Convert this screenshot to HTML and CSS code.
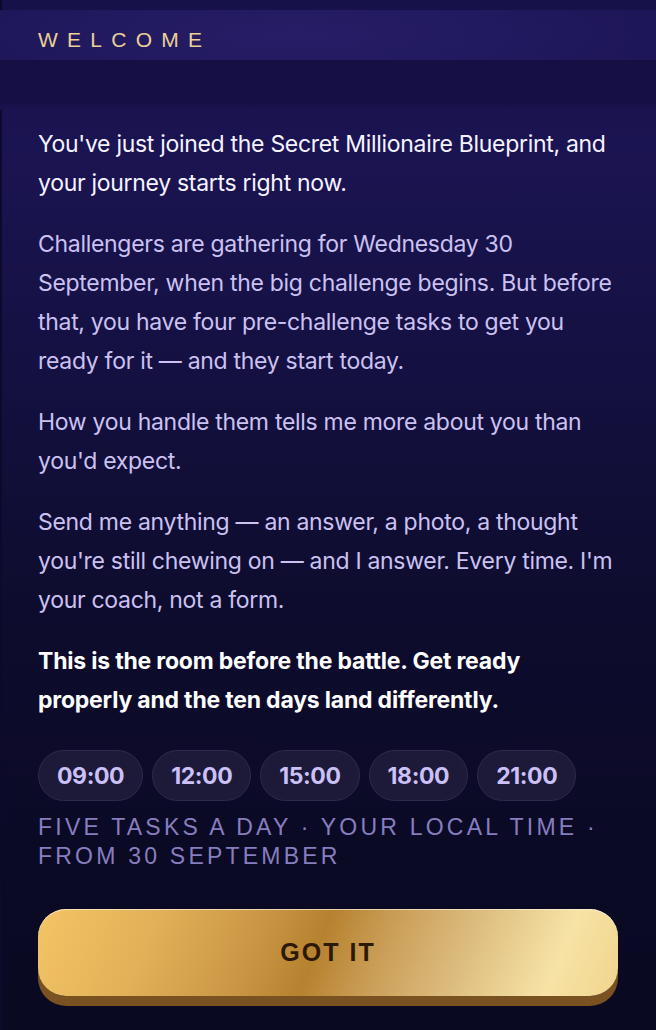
FILE: index.html
```html
<!DOCTYPE html>
<html lang="en">
<head>
<meta charset="utf-8">
<title>Welcome</title>
<link rel="stylesheet" href="styles.css">
</head>
<body>
<div class="panel">
  <header class="header">
    <div class="band"><span class="eyebrow">WELCOME</span></div>
    <div class="fade"></div>
  </header>
  <main class="content">
    <p class="lead">You've just joined the Secret Millionaire Blueprint, and your journey starts right now.</p>
    <p>Challengers are gathering for Wednesday 30 September, when the big challenge begins. But before that, you have four pre-challenge tasks to get you ready for it — and they start today.</p>
    <p>How you handle them tells me more about you than you'd expect.</p>
    <p>Send me anything — an answer, a photo, a thought you're still chewing on — and I answer. Every time. I'm your coach, not a form.</p>
    <p class="strong">This is the room before the battle. Get ready properly and the ten days land differently.</p>
    <div class="chips">
      <span class="chip">09:00</span>
      <span class="chip">12:00</span>
      <span class="chip">15:00</span>
      <span class="chip">18:00</span>
      <span class="chip">21:00</span>
    </div>
    <p class="caption">Five tasks a day · your local time · from 30 September</p>
    <button class="cta" type="button">GOT IT</button>
  </main>
</div>
</body>
</html>
```
FILE: styles.css
```css
* { box-sizing: border-box; }
html, body { margin: 0; padding: 0; }
body {
  background: #0a0922;
  font-family: Inter, "Noto Sans", sans-serif;
}
.panel {
  min-height: 1030px;
  box-shadow: inset 2px 0 0 #0c0a2a;
  background: linear-gradient(180deg, #17114a 0px, #1a1350 110px, #1b1452 150px, #141040 380px, #0e0c2e 600px, #0b0a25 850px, #0a0922 1030px);
  padding-top: 10px;
}
.band {
  height: 50px;
  display: flex;
  align-items: center;
  padding-left: 38px;
  padding-top: 10px;
  background: radial-gradient(ellipse 60% 160% at 45% 50%, #261d66 0%, #221a60 50%, #1c1556 100%);
}
.eyebrow {
  color: #ebd195;
  font-family: "Liberation Sans", Arial, sans-serif;
  font-size: 21px;
  letter-spacing: 0.44em;
}
.fade {
  height: 50px;
  background: linear-gradient(180deg, #150f44 0%, #160f46 85%, #1a1350 100%);
}
.content {
  padding: 15px 42px 0 38px;
}
.content p {
  margin: 0 0 22px 0;
  font-size: 23px;
  line-height: 39px;
  letter-spacing: -0.3px;
  color: #cbc2f2;
}
.content p.lead { color: #f6f3ff; }
.content p.strong {
  color: #ffffff;
  font-weight: 700;
  font-size: 23px;
  letter-spacing: -0.2px;
  margin-bottom: 30px;
}
.chips {
  display: flex;
  gap: 9px;
}
.chip {
  height: 51px;
  padding: 0 18px;
  display: inline-flex;
  align-items: center;
  border-radius: 26px;
  background: #1c1a38;
  border: 1px solid #2d2a4e;
  color: #cbc0f7;
  font-weight: 700;
  font-size: 23px;
  letter-spacing: -0.4px;
}
.content p.caption {
  margin: 12px -4px 38px 0;
  font-family: "Liberation Sans", Arial, sans-serif;
  text-transform: uppercase;
  font-size: 23px;
  line-height: 29px;
  letter-spacing: 0.14em;
  color: #877ebf;
}
.cta {
  display: block;
  width: calc(100% + 4px);
  height: 87px;
  border: 0;
  border-radius: 28px;
  background: linear-gradient(112deg, #f3c565 0%, #e1b058 20%, #c99544 38%, #b7822f 48%, #c99c55 58%, #dcbc7e 72%, #f7e3a6 88%, #f0d48c 100%);
  box-shadow: 0 10px 0 #7a5222, inset 0 1px 0 rgba(255,245,220,0.7);
  color: #2b1a08;
  font-family: "Liberation Sans", Arial, sans-serif;
  font-weight: 700;
  font-size: 25px;
  letter-spacing: 2px;
  cursor: pointer;
}
```
